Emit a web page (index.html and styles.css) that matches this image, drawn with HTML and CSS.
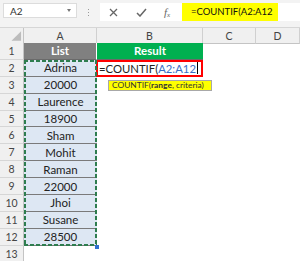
FILE: index.html
```html
<!DOCTYPE html>
<html>
<head>
<meta charset="utf-8">
<link rel="stylesheet" href="styles.css">
</head>
<body>
<div class="app">
  <div class="toolbar">
    <div class="namebox"><span>A2</span><span class="caret"></span></div>
    <div class="grip"><i></i><i></i><i></i></div>
    <div class="fxbox">
      <svg class="ico x" width="9" height="9" viewBox="0 0 9 9"><path d="M1 1L8 8M8 1L1 8" stroke="#666" stroke-width="1.3" fill="none"/></svg>
      <svg class="ico ok" width="11" height="9" viewBox="0 0 11 9"><path d="M1 5L4 8L10 1" stroke="#666" stroke-width="1.5" fill="none"/></svg>
      <span class="fx">f<sub>x</sub></span>
    </div>
    <div class="formula"><span class="hl">=COUNTIF(A2:A12</span></div>
  </div>
  <div class="sheet">
    <div class="row head">
      <div class="rh corner"><svg width="24" height="15" viewBox="0 0 24 15"><path d="M12 13H22V3Z" fill="#bcbcbc"/></svg></div>
      <div class="ch">A</div><div class="ch">B</div><div class="ch">C</div><div class="ch">D</div>
    </div>
    <div class="row"><div class="rh">1</div><div class="c th grey">List</div><div class="c th green">Result</div><div class="c"></div><div class="c"></div></div>
    <div class="row"><div class="rh">2</div><div class="c a">Adrina</div><div class="c edit"><span>=COUNTIF(</span><span class="ref">A2:A12</span><span class="cursor"></span><div class="tip">COUNTIF(<b>range</b>, criteria)</div></div><div class="c"></div><div class="c"></div></div>
    <div class="row"><div class="rh">3</div><div class="c a">20000</div><div class="c"></div><div class="c"></div><div class="c"></div></div>
    <div class="row"><div class="rh">4</div><div class="c a">Laurence</div><div class="c"></div><div class="c"></div><div class="c"></div></div>
    <div class="row"><div class="rh">5</div><div class="c a">18900</div><div class="c"></div><div class="c"></div><div class="c"></div></div>
    <div class="row"><div class="rh">6</div><div class="c a">Sham</div><div class="c"></div><div class="c"></div><div class="c"></div></div>
    <div class="row"><div class="rh">7</div><div class="c a">Mohit</div><div class="c"></div><div class="c"></div><div class="c"></div></div>
    <div class="row"><div class="rh">8</div><div class="c a">Raman</div><div class="c"></div><div class="c"></div><div class="c"></div></div>
    <div class="row"><div class="rh">9</div><div class="c a">22000</div><div class="c"></div><div class="c"></div><div class="c"></div></div>
    <div class="row"><div class="rh">10</div><div class="c a">Jhoi</div><div class="c"></div><div class="c"></div><div class="c"></div></div>
    <div class="row"><div class="rh">11</div><div class="c a">Susane</div><div class="c"></div><div class="c"></div><div class="c"></div></div>
    <div class="row"><div class="rh">12</div><div class="c a">28500</div><div class="c"></div><div class="c"></div><div class="c"></div></div>
    <div class="row"><div class="rh">13</div><div class="c"></div><div class="c"></div><div class="c"></div><div class="c"></div></div>
    <div class="ants"></div>
  </div>
</div>
</body>
</html>
```
FILE: styles.css
```css
* { box-sizing: border-box; }
html, body { margin: 0; padding: 0; background: #fff; }
.app { width: 300px; height: 261px; overflow: hidden; font-family: Lato, "Liberation Sans", sans-serif; }

.toolbar {
  height: 28px;
  background: #f3f3f3;
  display: flex;
  align-items: flex-start;
  padding-top: 3px;
  border-bottom: 1px solid #d6d6d6;
}
.namebox {
  margin-left: 3px;
  width: 74px;
  height: 15px;
  background: #fff;
  border: 1px solid #dcdcdc;
  display: flex;
  align-items: center;
  justify-content: space-between;
  padding: 0 5px 0 6px;
  font-size: 10px;
  color: #333;
}
.caret {
  width: 0; height: 0;
  border-left: 2.5px solid transparent;
  border-right: 2.5px solid transparent;
  border-top: 3px solid #777;
}
.grip {
  width: 23px;
  height: 18px;
  display: flex;
  flex-direction: column;
  align-items: center;
  justify-content: center;
  gap: 2px;
}
.grip i { display: block; width: 1px; height: 1px; background: #9a9a9a; }
.fxbox {
  width: 82px;
  height: 18px;
  background: #fff;
  display: flex;
  align-items: center;
  padding-left: 9px;
}
.ico.x { margin-right: 18px; }
.ico.ok { margin-right: 17px; }
.fx {
  font-family: "Liberation Serif", serif;
  font-style: italic;
  font-size: 11px;
  color: #666;
}
.fx sub { font-size: 7px; vertical-align: -1px; }
.formula {
  flex: 1;
  height: 18px;
  background: #fff;
  display: flex;
}
.hl {
  width: 96px;
  height: 18px;
  background: #ffff00;
  font-size: 9.5px;
  line-height: 18px;
  padding-left: 9px;
  color: #111;
}

.sheet { position: relative; }
.row {
  display: grid;
  grid-template-columns: 24px 73px 106px 53px 44px;
  height: 16.9px;
}
.row.head { height: 15px; }
.rh {
  background: #f0f0f0;
  border-right: 1px solid #c4c4c4;
  border-bottom: 1px solid #d6d6d6;
  font-size: 10.5px;
  color: #444;
  display: flex;
  align-items: center;
  justify-content: center;
}
.corner { padding: 0; }
.corner svg { display: block; }
.ch {
  background: #f0f0f0;
  border-right: 1px solid #d0d0d0;
  border-bottom: 1px solid #c4c4c4;
  font-size: 10.5px;
  color: #444;
  display: flex;
  align-items: center;
  justify-content: center;
}
.c {
  display: flex;
  align-items: center;
  justify-content: center;
  font-size: 11.5px;
  color: #222;
  white-space: nowrap;
}
.th { color: #fff; font-weight: bold; font-size: 11.5px; }
.grey { background: #808080; border-right: 1px solid #fff; border-bottom: 1px solid #6a6a6a; }
.green { background: #00b050; border-bottom: 1px solid #6a6a6a; }
.a {
  background: #dde7f3;
  border-bottom: 1px solid #7a7a7a;
}
.edit {
  position: relative;
  justify-content: flex-start;
  border: 2px solid #ff0000;
  margin-left: -1px;
  padding-left: 1px;
  font-size: 11.3px;
  overflow: visible;
}
.ref { color: #3a6fc6; }
.cursor { display: inline-block; width: 1px; height: 12px; background: #000; margin-left: 1px; }
.tip {
  position: absolute;
  left: 10px;
  top: 18px;
  width: 104px;
  height: 11px;
  background: #ffff00;
  border: 1px solid #a8a8a8;
  font-size: 8.4px;
  line-height: 9px;
  color: #333;
  padding-left: 3px;
  font-family: Lato, "Liberation Sans", sans-serif;
  white-space: nowrap;
  z-index: 2;
}
.tip b { font-weight: bold; }
.ants {
  position: absolute;
  left: 24px;
  top: 31.9px;
  width: 73px;
  height: 185.9px;
  background:
    repeating-linear-gradient(90deg, #2e7d4f 0 4px, transparent 4px 6px) top / 100% 2px no-repeat,
    repeating-linear-gradient(90deg, #2e7d4f 0 4px, transparent 4px 6px) bottom / 100% 2px no-repeat,
    repeating-linear-gradient(180deg, #2e7d4f 0 4px, transparent 4px 6px) left / 2px 100% no-repeat,
    repeating-linear-gradient(180deg, #2e7d4f 0 4px, transparent 4px 6px) right / 2px 100% no-repeat;
  pointer-events: none;
}
.ants::after {
  content: "";
  position: absolute;
  right: -2px;
  bottom: -3px;
  width: 4px;
  height: 4px;
  background: #2f6fd0;
}
```
